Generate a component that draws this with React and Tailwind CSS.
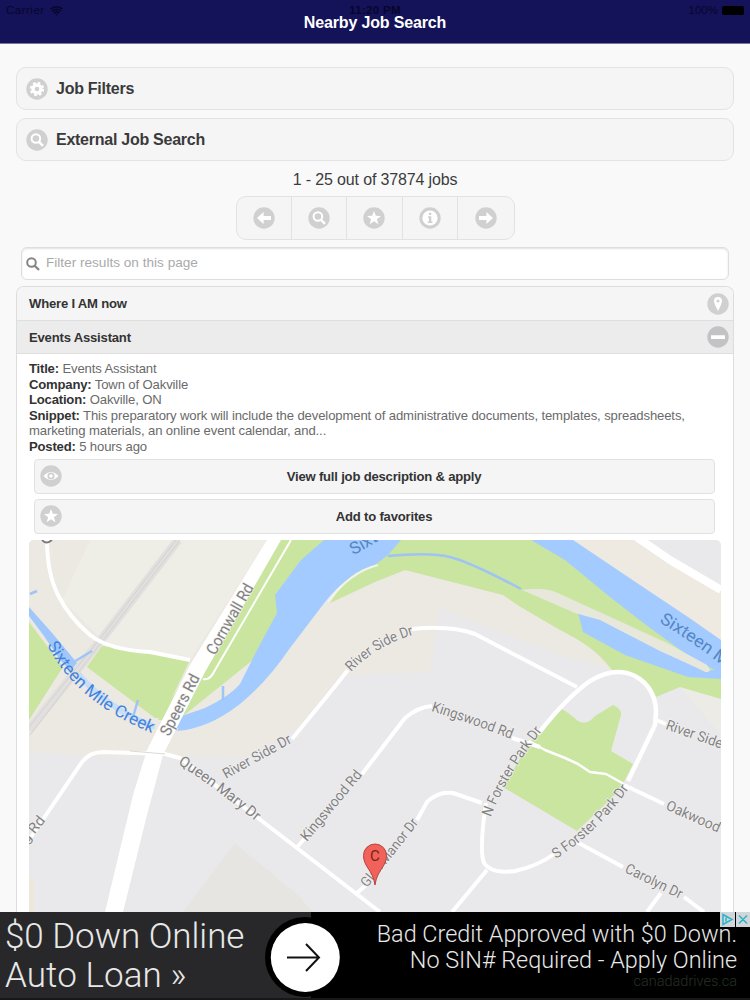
import { useState } from 'react'
import { Wifi } from 'lucide-react'

const toolbar = [
  { id: 'prev', icon: 'left' },
  { id: 'search', icon: 'search' },
  { id: 'favorites', icon: 'star' },
  { id: 'info', icon: 'info' },
  { id: 'next', icon: 'right' }
]

const details = [
  { label: 'Title:', value: 'Events Assistant' },
  { label: 'Company:', value: 'Town of Oakville' },
  { label: 'Location:', value: 'Oakville, ON' },
  {
    label: 'Snippet:',
    value: 'This preparatory work will include the development of administrative documents, templates, spreadsheets, marketing materials, an online event calendar, and...'
  },
  { label: 'Posted:', value: '5 hours ago' }
]

// Label baselines on the map, with the length each text should cover
const labels = [
  { id: 'cornwall', text: 'Cornwall Rd', d: 'M215 656L256 584', len: 79, size: 16 },
  { id: 'speers', text: 'Speers Rd', d: 'M169 737L202 674', len: 67, size: 16 },
  { id: 'river1', text: 'River Side Dr', d: 'M351 672Q377 645 416 634', len: 74, size: 14.5 },
  { id: 'river2', text: 'River Side Dr', d: 'M226 779L295 741', len: 76, size: 14.5 },
  { id: 'queen', text: 'Queen Mary Dr', d: 'M178 764Q214 787 260 825', len: 97, size: 15 },
  { id: 'kings1', text: 'Kingswood Rd', d: 'M307 842L366 771', len: 87, size: 14.5 },
  { id: 'kings2', text: 'Kingswood Rd', d: 'M431 711Q473 724 516 741', len: 85, size: 14.5 },
  { id: 'nforster', text: 'N Forster Park Dr', d: 'M491 817Q505 778 545 727', len: 101, size: 14.5 },
  { id: 'sforster', text: 'S Forster Park Dr', d: 'M556 859Q601 830 632 784', len: 102, size: 14.5 },
  { id: 'river3', text: 'River Side Dr', d: 'M665 729L745 757', len: 76, size: 14.5 },
  { id: 'oakwood', text: 'Oakwood Dr', d: 'M665 809L745 845', len: 75, size: 14.5 },
  { id: 'carolyn', text: 'Carolyn Dr', d: 'M624 872L684 901', len: 62, size: 14.5 },
  { id: 'glen', text: 'Glen Manor Dr', d: 'M367 888Q396 852 421 820', len: 83, size: 14 },
  { id: 'rd', text: 'g Rd', d: 'M27 844L47 819', len: 30, size: 14.5 }
]

const waterLabels = [
  { id: 'creek', text: 'Sixteen Mile Creek', d: 'M47 645Q78 705 157 735', len: 140, size: 17, color: '#3f82dc' },
  { id: 'creek2', text: 'Sixteen Mile', d: 'M659 622Q700 646 745 684', len: 98, size: 17, color: '#5486c6' },
  { id: 'creek3', text: 'Sixteen', d: 'M353 555Q375 545 400 524', len: 58, size: 17, color: '#5486c6' }
]

function DiscIcon({ name, dark }) {
  return (
    <svg viewBox="0 0 22 22" className={`w-[22px] h-[22px] shrink-0 ${dark ? 'text-[#c3c3c5]' : 'text-[#d0d0d0]'}`}>
      <circle cx="11" cy="11" r="10.7" fill="currentColor" />
      <g fill="#fff">
        {name === 'gear' && (
          <>
            <circle cx="11" cy="11" r="4" fill="none" stroke="#fff" strokeWidth="3.4" />
            <circle cx="11" cy="11" r="6.2" fill="none" stroke="#fff" strokeWidth="2" strokeDasharray="2.6 2.27" />
          </>
        )}
        {name === 'search' && (
          <g fill="none" stroke="#fff">
            <circle cx="9.9" cy="9.5" r="4.3" strokeWidth="2" />
            <path d="M13 12.8L17 16.8" strokeWidth="2.5" />
          </g>
        )}
        {name === 'left' && <path d="M4 11L10.6 5v3.9H18v4.2h-7.4V17z" />}
        {name === 'right' && <path d="M18 11L11.4 5v3.9H4v4.2h7.4V17z" />}
        {name === 'star' && <path d="M11 4l1.8 4.8 5.2.2-4.1 3.2 1.5 5L11 14.3l-4.4 2.9 1.5-5L4 9l5.2-.2z" />}
        {name === 'info' && (
          <>
            <circle cx="11" cy="11" r="7.6" />
            <path d="M9.9 5.8h2.4v2.3H9.9zM9 9.300h3.300v5.200h1.200V16H8.800v-1.500h1.100v-3.700H9z" fill="currentColor" />
          </>
        )}
        {name === 'pin' && (
          <path fillRule="evenodd" d="M11 4a4 4 0 0 0-4 4c0 2.800 4 10 4 10s4-7.200 4-10a4 4 0 0 0-4-4zm0 2.600a1.500 1.500 0 1 1 0 3 1.500 1.500 0 0 1 0-3z" />
        )}
        {name === 'minus' && <path d="M4 9.200h14v3.800H4z" />}
        {name === 'eye' && (
          <>
            <path d="M3.500 11Q11 2.800 18.500 11 11 19.200 3.500 11z" />
            <circle cx="11" cy="11" r="3.600" fill="currentColor" />
            <circle cx="11" cy="11" r="1.800" />
          </>
        )}
      </g>
    </svg>
  )
}

function MapLabel({ label }) {
  return (
    <>
      <path id={label.id} d={label.d} fill="none" />
      <text fontSize={label.size} fill={label.color || '#828282'} stroke={label.color ? 'none' : '#f3f2f2'} strokeWidth="1.500" paintOrder="stroke">
        <textPath href={`#${label.id}`} textLength={label.len} lengthAdjust="spacingAndGlyphs">{label.text}</textPath>
      </text>
    </>
  )
}

function JobMap() {
  return (
    <svg viewBox="29 540 692 372" className="block ml-[12px] w-[692px] h-[372px] rounded-t-[5px]" fontFamily="Roboto, sans-serif">
      <rect x="29" y="540" width="692" height="372" fill="#e9e8ea" />

      {/* Land */}
      <path d="M29 540H400L430 575 503 595 590 645 612 670 560 655 500 632 440 608 430 672 375 674 340 675 300 726 245 757H95L29 752z" fill="#ece8e2" />
      <path d="M90 540H267L190 660 108 645 62 600z" fill="#eeede6" />
      <path d="M573 540H632L721 592V643z" fill="#eeeae2" />
      <path d="M235 843L183 912H312L300 897z" fill="#e6e5e2" />
      <path d="M680 687L721 699V735z" fill="#edebe6" />
      <path d="M29 875L34 880V912H29z" fill="#ede8dc" />

      {/* Parks */}
      <path d="M29 622L63 667 29 720z" fill="#c9e5a0" />
      <path d="M102 646L150 652 190 660 162 718 155 718 87 667z" fill="#c9e5a0" />
      <path d="M272 540H350L325 602 178 720H158z" fill="#c9e5a0" />
      <path d="M330 603L345 580 400 540H540L721 672V699L680 687 656 697 645 680 612 670C600 655 590 645 560 630L519 606 503 595 405 570 375 582z" fill="#c9e5a0" />
      <path d="M560 708Q568 712 578 721 587 726 595 716L613 705Q622 709 621 715L611 751 633 764 620 790 577 831 503 787 530 742z" fill="#c9e5a0" />

      {/* Water */}
      <path d="M324 540L301 560 275 595 277 613 257 650 240 684Q230 696 205 708L176 718V731Q208 729 240 704 267 682 290 648L325 602Q350 571 375 565L388 555 401 540z" fill="#a3cbff" />
      <path d="M328 602Q350 572 378 565" fill="none" stroke="#f1f3ee" strokeWidth="2" />
      <path d="M388 556Q430 552 450 557T521 589" fill="none" stroke="#9fc4f3" strokeWidth="2.500" />
      <path d="M531 540H573L640 585 688 617 721 640V672L700 664 650 628 610 597 565 560z" fill="#a3cbff" />
      <path d="M578 613L605 617 705 672 721 668V679L688 677 625 655 583 632z" fill="#a3cbff" />
      <path d="M522 590Q545 586 560 594L606 615 667 643 707 665Q713 672 706 672L660 651 600 620 575 613z" fill="#e8e7dc" />
      <path d="M29 607L53 634 68 652 82 669 77 677 60 660 44 636 29 616z" fill="#a0c7fb" />
      <path d="M75 670Q105 708 155 727" fill="none" stroke="#c7ddf8" strokeWidth="6" />

      {/* Railway */}
      <path d="M178 540L105 635 29 730" fill="none" stroke="#e2e0de" strokeWidth="9" />
      <path d="M176 540L103 635 29 727M180 540L107 635 30 735" fill="none" stroke="#d3d1d0" strokeWidth="1" />
      <path d="M72 663L92 651M30 594L37 591M133 717L138 700M223 700V686" fill="none" stroke="#9fc4f6" strokeWidth="2.500" />

      {/* Roads */}
      <path d="M267 540L190 665 147 750 133 795 105 912H123L147 815 163 755 205 672 281 540z" fill="#fff" />
      <g fill="none" stroke="#fff" strokeWidth="4" strokeLinejoin="round">
        <path d="M47 540Q47 573 58 595T90 635Q109 650 150 652L190 660" />
        <path d="M291 540L215 670Q210 681 203 679" strokeWidth="2" />
        <path d="M635 536L670 560 721 590" strokeWidth="8" />
        <path d="M29 840L82 762Q90 752 103 752L165 754 180 758 258 818 380 912" />
        <path d="M292 739L328 695 348 670M412 629Q450 625 475 634L577 687" />
        <path d="M297 847L308 835M362 774L382 748 405 718Q418 707 432 706M512 738L540 747" />
        <path d="M538 734Q567 697 590 681 615 666 635 676 655 687 656 711L655 725 643 750 628 781" strokeWidth="4.500" />
        <path d="M486 803Q479 850 484 863 491 874 515 871 538 866 554 854" />
        <path d="M487 870L452 912M482 803L453 793Q438 791 427 802L417 820M366 885L357 893M656 720L666 724" />
        <path d="M624 785L664 804M575 841L623 867M661 893L647 912M684 897L704 912" />
        <path d="M529 741L545 750 565 758 578 764 590 772 606 774 624 784" strokeWidth="2.500" />
      </g>
      <path d="M130 751L165 754" stroke="#dcdad6" strokeWidth="1" />

      {labels.map(label => <MapLabel key={label.id} label={label} />)}
      {waterLabels.map(label => <MapLabel key={label.id} label={label} />)}
      <path d="M42 540Q46 545 52 540" fill="none" stroke="#777" strokeWidth="1.800" />

      {/* Marker */}
      <path d="M375 885C373 870 363.500 867 363.500 855.500a11.500 11.500 0 0 1 23 0C386.500 867 377 870 375 885z" fill="#f0625a" stroke="#b8443d" strokeWidth="1" />
      <text x="375" y="861" fontSize="15" textAnchor="middle" fill="#7c1f1b">C</text>
    </svg>
  )
}

function FilterButton({ icon, children }) {
  return (
    <button className="w-full h-[43px] px-[9px] flex items-center gap-[8px] rounded-[10px] border border-[#e3e3e4] bg-[#f5f5f6] text-[16px] tracking-[-0.26px] font-bold text-[#3a3a3a] text-left">
      <DiscIcon name={icon} />
      <span className="pt-px">{children}</span>
    </button>
  )
}

function ActionButton({ icon, children }) {
  return (
    <button className="w-full h-[35px] pl-[5px] flex items-center rounded-[4px] border border-[#e1e1e2] bg-[#f5f5f6] text-[13.1px] tracking-[-0.2px] font-bold text-[#333]">
      <DiscIcon name={icon} />
      <span className="flex-1 pt-[2px] pr-[8px]">{children}</span>
    </button>
  )
}

function AdBanner() {
  return (
    <footer className="relative shrink-0 h-[88px] bg-black font-['Roboto',sans-serif] font-light text-[#e8e8e8] flex justify-between border-b-2 border-[#171717] overflow-hidden">
      <div className="w-[311px] shrink-0 bg-[#28282a] pl-[5px] pt-[5px] text-[35px] leading-[39px] whitespace-nowrap">
        <p className="tracking-[-0.05px]">$0 Down Online</p>
        <p className="tracking-[0.1px]">Auto Loan »</p>
      </div>
      <div className="flex-1 pr-[13px] pt-[9px] text-right text-[23.4px] leading-[26px] whitespace-nowrap">
        <p>Bad Credit Approved with $0 Down.</p>
        <p>No SIN# Required - Apply Online</p>
        <p className="text-[14.500px] leading-[18px] text-[#263026]">canadadrives.ca</p>
      </div>
      <svg viewBox="0 0 80 80" className="absolute left-[265px] top-[5px] w-20 h-20">
        <circle cx="40" cy="40" r="40" fill="#000" />
        <circle cx="40.300" cy="40.500" r="34.500" fill="#fff" />
        <path d="M22 40.500H53M41 27L54 40.500 41 54" fill="none" stroke="#111" strokeWidth="2" />
      </svg>
      <svg viewBox="0 0 30 15" className="absolute right-0 top-0 w-[30px] h-[15px]">
        <path d="M0 0H15V15H0zM16 0H30V15H16z" fill="#d2d6d8" />
        <path d="M3 2.500L12 7.500 3 12.500zM6 5.500v4M19 3.500l8 8M27 3.500l-8 8" fill="none" stroke="#2ab4cc" strokeWidth="1.500" />
      </svg>
    </footer>
  )
}

function App() {
  const [query, setQuery] = useState('')

  return (
    <div className="h-screen flex flex-col overflow-hidden bg-[#f9f9fa] font-['Liberation_Sans',sans-serif] text-[#333]">
      {/* Header */}
      <header className="relative shrink-0 h-[44px] bg-[#141259] border-b border-[#77769b] text-white">
        <h1 className="pt-[11px] text-center text-[16px] leading-[23px] tracking-[-0.15px] font-bold">Nearby Job Search</h1>
        <div className="absolute inset-x-0 top-[3px] h-[14px] px-[6px] grid grid-cols-3 items-center text-[11.500px] leading-[14px] text-[#07062c]">
          <span className="flex items-center gap-[5px] tracking-[0.5px]">
            Carrier
            <Wifi className="w-[13px] h-[13px]" strokeWidth={3} />
          </span>
          <span className="text-center font-bold tracking-[0.3px]">11:20 PM</span>
          <span className="flex items-center justify-end gap-1">
            100%
            <span className="w-[22px] h-[9px] rounded-[2px] bg-black" />
          </span>
        </div>
      </header>

      <main className="flex-1 min-h-0 overflow-hidden px-4 pt-[23px]">
        <div className="space-y-2">
          <FilterButton icon="gear">Job Filters</FilterButton>
          <FilterButton icon="search">External Job Search</FilterButton>
        </div>

        <p className="mt-[9px] text-center text-[16px] leading-[20px] tracking-[-0.15px] text-[#3c3c3c]">1 - 25 out of 37874 jobs</p>

        <div className="mt-[6px] mx-auto w-[279px] h-[44px] grid grid-cols-5 divide-x divide-[#e2e2e3] rounded-[10px] border border-[#e2e2e3] bg-[#f5f5f6]">
          {toolbar.map(item => (
            <button key={item.id} className="flex items-center justify-center">
              <DiscIcon name={item.icon} />
            </button>
          ))}
        </div>

        <label className="mt-[7px] ml-[5px] mr-[5px] h-[33px] pl-[4px] flex items-center gap-[6px] rounded-[6px] border border-[#dededf] bg-white shadow-[inset_0_1px_2px_rgba(0,0,0,0.12)]">
          <svg viewBox="0 0 14 14" className="w-[14px] h-[14px]" fill="none" stroke="#858585">
            <circle cx="5.500" cy="5.500" r="4.300" strokeWidth="2" />
            <path d="M8.700 8.700L13 13" strokeWidth="2.300" />
          </svg>
          <input
            value={query}
            onChange={e => setQuery(e.target.value)}
            placeholder="Filter results on this page"
            className="flex-1 bg-transparent text-[13.600px] outline-none placeholder:text-[#aaa]"
          />
        </label>

        {/* Results */}
        <section className="mt-[6px] rounded-t-[8px] border border-b-0 border-[#dddddf] bg-white overflow-hidden">
          <div className="h-[33px] pl-3 pr-[4px] flex items-center justify-between bg-[#f5f5f6] text-[13.100px] tracking-[-0.2px] font-bold">
            <span>Where I AM now</span>
            <DiscIcon name="pin" />
          </div>
          <div className="h-[34px] pl-3 pr-[4px] flex items-center justify-between border-y border-[#dfdfe0] bg-[#ececed] text-[13.100px] tracking-[-0.2px] font-bold">
            <span className="pt-px">Events Assistant</span>
            <DiscIcon name="minus" dark />
          </div>

          <div className="pl-3 pr-[20px] pt-[7px] text-[13.100px] leading-[15.600px] tracking-[-0.12px] text-[#6a6a6a]">
            {details.map(item => (
              <p key={item.label}>
                <b className="text-[#333] tracking-[-0.2px]">{item.label}</b> {item.value}
              </p>
            ))}
          </div>

          <div className="mt-[4px] mb-[6px] pl-[17px] pr-[18px] space-y-[5px]">
            <ActionButton icon="eye">View full job description &amp; apply</ActionButton>
            <ActionButton icon="star">Add to favorites</ActionButton>
          </div>

          <JobMap />
        </section>
      </main>

      <AdBanner />
    </div>
  )
}

export default App
